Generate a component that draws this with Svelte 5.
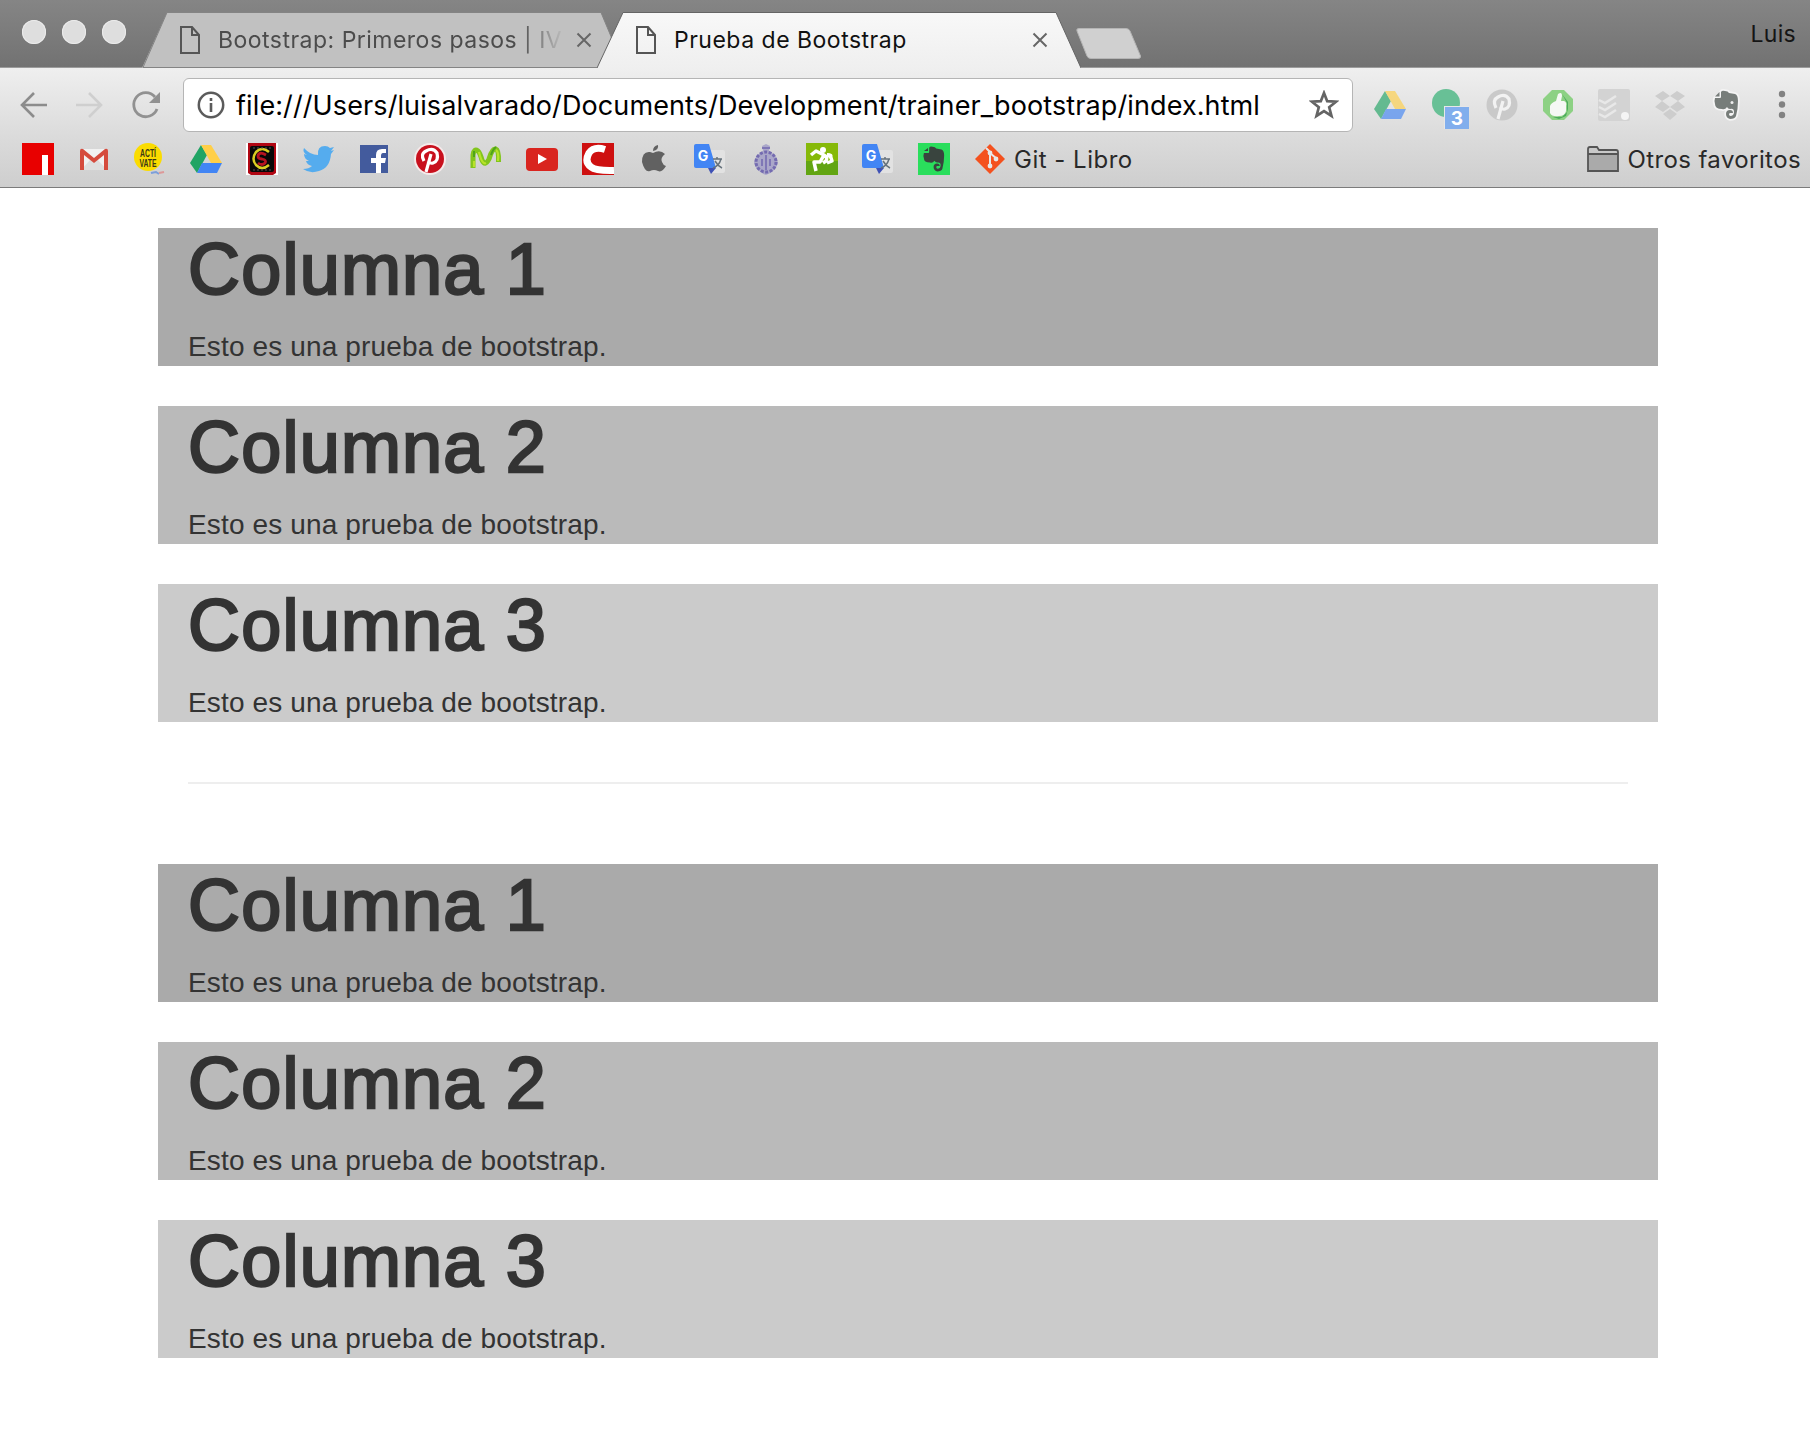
<script>
  const bookmarks = [
    'tile', 'gmail', 'acti', 'drive', 'cs', 'twitter', 'facebook', 'pinterest', 'movistar',
    'youtube', 'cinema', 'apple', 'translate', 'crest', 'runner', 'translate', 'evernote'
  ];
  const extensions = ['drive', 'circle', 'pin', 'thumb', 'todo', 'dropbox', 'elephant'];
  const groups = [[1, 2, 3], [1, 2, 3]];
  const elephantPath =
    'M11 3Q12 1 15 2Q18 2 19 4L25 5Q28 6 28 12Q28 20 26 27Q25 30 20 30Q16 29 16 25Q16 21 20 21Q23 21 23 24H20Q18 25 20 27Q24 27 24 23Q24 19 20 20Q18 20 17 18Q15 21 12 20Q5 20 5 15Q4 12 5 9H10Q11 9 11 8Z';
</script>

{#snippet file()}
  <svg class="file" viewBox="0 0 20 28"><path d="M1 1H12L19 9V27H1ZM12 1V9H19" /></svg>
{/snippet}

{#snippet cross()}
  <svg class="cross" viewBox="0 0 16 16"><path d="M1.5 1.5L14.5 14.5M14.5 1.5L1.5 14.5" /></svg>
{/snippet}

{#snippet icon(name)}
  <svg class="icon" viewBox="0 0 32 32">
    {#if name === 'tile'}
      <path fill="#e80000" d="M0 0H32V32H0Z" /><path fill="#fff" d="M20 12H26V32H20Z" />
    {:else if name === 'gmail'}
      <path fill="#f1f1f1" d="M3 6H29V27H3Z" /><path fill="#dedede" d="M3 27L13 16L16 19L19 16L29 27Z" />
      <path fill="#d54b3d" d="M2 8Q2 5 5 6L16 15L27 6Q30 5 30 8V27H26V12L16 20L6 12V27H2Z" />
    {:else if name === 'acti'}
      <circle cx="14" cy="14" r="14" fill="#fbdc00" />
      <text class="tiny" transform="translate(14 14) scale(.68 1)">ACTÍ</text><text class="tiny" transform="translate(14 23.5) scale(.68 1)">VATE</text>
      <path d="M17 30L22 29L25 31" stroke="#7c9fdb" stroke-width="2" fill="none" /><path d="M25 30L30 29" stroke="#d99" stroke-width="2" />
    {:else if name === 'drive'}
      <path fill="#20a464" d="M11 2L17 12L7 30L0 20Z" /><path fill="#ffcf48" d="M11 2H21L32 20H21Z" /><path fill="#4285f4" d="M12 20H32L27 30H7Z" />
    {:else if name === 'cs'}
      <path fill="#fff" d="M0 0H32V32H0Z" /><path fill="#b00713" d="M2 0H30V30L27 32H5L2 30Z" /><rect x="4" y="3" width="24" height="26" rx="2" fill="#080808" />
      <path d="M23 9Q16 3 10 9Q5 16 10 22Q16 28 23 22" fill="none" stroke="#d9cd22" stroke-width="2.5" />
      <path d="M20 12Q13 8 12 13Q12 16 16 16Q21 17 19 20Q16 23 12 20" fill="none" stroke="#b61420" stroke-width="2.8" />
      <path d="M7 5H25M7 27H25" stroke="#555" stroke-dasharray="2 2" />
    {:else if name === 'twitter'}
      <path fill="#55acee" d="M2 5Q8 12 16 12Q15 3 23 3Q26 3 28 5L32 4L29 8L32 7L29 11Q28 25 17 28Q8 31 1 26Q7 26 10 23Q5 22 4 18H7Q2 16 2 11L5 12Q0 9 2 5Z" />
    {:else if name === 'facebook'}
      <path fill="#435b9d" d="M2 2H30V30H2Z" /><path fill="#fff" d="M18 30V20H13V15H18V12Q18 6 24 6H28V10H25Q23 10 23 13V15H28L27 20H23V30Z" />
    {:else if name === 'pinterest'}
      <circle cx="16" cy="16" r="16" fill="#f5eaea" /><circle cx="16" cy="16" r="14" fill="#c8101d" />
      <path d="M12 29L17 11M10 18Q6 11 12 8Q19 4 23 10Q25 18 19 20Q16 21 14 18" fill="none" stroke="#fff" stroke-width="3.2" />
    {:else if name === 'movistar'}
      <path d="M3 25V12Q4 5 8 8Q10 10 12 17Q15 24 19 16Q22 5 26 6Q29 7 28.5 19" fill="none" stroke="#82c51c" stroke-width="5" stroke-linejoin="round" />
      <path d="M9 9Q12 22 16 20M26 7Q29 9 28 18M4 24V18" fill="none" stroke="#b9e22a" stroke-width="2.2" /><path d="M21 12Q23 6 26 4M4 8V14" fill="none" stroke="#4da31c" stroke-width="2" />
    {:else if name === 'youtube'}
      <rect y="5" width="32" height="23" rx="4" fill="#d9251f" /><path fill="#fff" d="M12 11L21 16L12 21Z" />
    {:else if name === 'cinema'}
      <path fill="#ce1010" d="M0 0H32V32H0Z" /><path d="M23 6.5Q12 3 7 10Q2 19 9 24Q14 28 32 27.5" fill="none" stroke="#fff" stroke-width="7" />
    {:else if name === 'apple'}
      <path fill="#616161" d="M15 10Q22 6 27 11Q22 15 24 19Q25 22 28 23Q24 30 20 28Q16 26 12 28Q7 30 4 19Q4 8 12 9ZM15 8Q15 3 20 2Q21 7 15 8Z" />
    {:else if name === 'translate'}
      <rect x="16" y="7" width="15" height="23" rx="2" fill="#e2e2e2" /><path fill="#4285f4" d="M2 1H15L22 25H2Q0 25 0 23V3Q0 1 2 1Z" />
      <path fill="#3f51b5" d="M14 25H22L17 31Z" />
      <text class="letter" x="9" y="18">G</text><path d="M19 16H28M23 14V16M27 16Q25 23 19 25M21 18Q24 23 28 25" fill="none" stroke="#66727c" stroke-width="1.5" />
    {:else if name === 'crest'}
      <path fill="#aaa7c9" d="M12 3L16 1L20 3L19 8Q27 12 28 20Q25 29 16 32Q7 29 4 20Q5 12 13 8Z" />
      <ellipse cx="16" cy="19" rx="10" ry="10" fill="none" stroke="#746bb0" stroke-width="3" stroke-dasharray="3 1.5" />
      <path d="M12 5H20M16 12V27M12 16V23M20 16V23" stroke="#7f77b6" stroke-width="2" fill="none" />
    {:else if name === 'runner'}
      <path fill="#86b909" d="M0 0H32V32H0Z" /><path fill="#62a512" d="M0 18H32V32H0Z" /><circle cx="17" cy="7" r="3" fill="#fff" />
      <path d="M5 12L10 8L18 12L14 19H8L10 28M18 12Q22 14 20 18L17 20M21 12Q25 12 26 18L21 20" fill="none" stroke="#fff" stroke-width="3.5" stroke-linejoin="round" />
      <path d="M21 11Q27 11 25 14" fill="none" stroke="#fff" stroke-width="2" />
    {:else if name === 'evernote'}
      <path fill="#2ade5c" d="M0 0H32V32H0Z" /><path transform="translate(1.5 2) scale(.88)" d={elephantPath} fill="#39443e" /><path d="M6 8L10 5V8Z" fill="#39443e" />
    {:else if name === 'git'}
      <path fill="#f4511e" d="M16 1L31 16L16 31L1 16Z" /><path d="M12 5L16 9V24M16 10L23 16" stroke="#e7e7e7" stroke-width="2" fill="none" />
      <circle cx="16" cy="10" r="2.4" fill="#e7e7e7" /><circle cx="16" cy="23" r="2.4" fill="#e7e7e7" /><circle cx="22" cy="16" r="2.4" fill="#e7e7e7" />
    {:else if name === 'circle'}
      <circle cx="16" cy="14" r="14" fill="#68c096" />
    {:else if name === 'pin'}
      <circle cx="16" cy="16" r="15.5" fill="#c9c9c9" />
      <path d="M12 30L17 12M10 19Q6 11 12 8Q19 4 23 10Q25 18 19 20Q16 21 14 18" fill="none" stroke="#f2f2f2" stroke-width="3.2" />
    {:else if name === 'thumb'}
      <path fill="#8dd184" d="M10 1H22L31 10V22L22 31H10L1 22V10Z" /><path fill="#4caa5c" d="M20 5L25 14V23L20 28H11L17 30L24 27L26 20V13Z" />
      <path fill="#f5f8f4" d="M16 5Q20 2 20 7L19 12H22Q25 13 24 17V22Q23 27 17 27Q10 28 8 24V17Q9 14 14 12Z" />
    {:else if name === 'todo'}
      <rect width="32" height="32" rx="2" fill="#d3d3d3" /><path d="M1 11L7 14L18 7M1 18L7 21L18 14M1 25L7 28L18 21" fill="none" stroke="#e8e8e8" stroke-width="2.5" /><circle cx="27" cy="27" r="4" fill="#f4f4f4" />
    {:else if name === 'dropbox'}
      <path fill="#cdcdcd" d="M1 7L9 2L16 7L8 12ZM16 7L23 2L31 7L24 12ZM1 18L8 12L16 18L9 23ZM16 18L24 12L31 18L23 23ZM9 25L16 20L23 25L16 31Z" />
    {:else if name === 'elephant'}
      <path d={elephantPath} fill="#777d7a" stroke="#f4f4f4" stroke-width="3.5" stroke-linejoin="round" /><path d={elephantPath} fill="#777d7a" />
      <path fill="#777d7a" d="M5 7.5L9.5 3V7.5Z" /><circle cx="22" cy="13.5" r="1.5" fill="#eee" />
    {/if}
  </svg>
{/snippet}

<div class="window">
  <header class="titlebar">
    <div class="lights"><i></i><i></i><i></i></div>
    <div class="tab idle">
      <svg class="shape" viewBox="0 0 482 56"><path class="fill" d="M0 56L25 .5H459L482 56Z" /><path class="edge" d="M1 55.5L25 .5H459L482 55.5Z" /></svg>
      {@render file()}<span class="title first">Bootstrap: Primeros pasos | IVI</span>{@render cross()}
    </div>
    <div class="tab active">
      <svg class="shape" viewBox="0 0 484 56">
        <defs><linearGradient id="tabfill" x2="0" y2="1"><stop stop-color="#f8f8f8" /><stop offset="1" stop-color="#efefef" /></linearGradient></defs>
        <path fill="url(#tabfill)" d="M0 56L26 .5H459L484 56Z" /><path class="edge" d="M0 56L26 .5H459L484 56" />
      </svg>
      {@render file()}<span class="title second">Prueba de Bootstrap</span>{@render cross()}
    </div>
    <svg class="newtab" viewBox="0 0 66 31"><path d="M3 .5H50Q53 .5 54 3L64.5 28Q65 30.5 62 30.5H15Q12 30.5 11 28L1 3Q0 .5 3 .5Z" /></svg>
    <span class="user">Luis</span>
  </header>

  <nav class="toolbar">
    <div class="controls">
      <svg viewBox="0 0 32 32"><path d="M29 16H4M16 4L4 16L16 28" fill="none" stroke="#8c8c8c" stroke-width="2.6" /></svg>
      <svg viewBox="0 0 32 32"><path d="M2 16H27M15 4L27 16L15 28" fill="none" stroke="#cfcfcf" stroke-width="2.6" /></svg>
      <svg viewBox="0 0 32 32"><path d="M27 20A12 12 0 1 1 25 8" fill="none" stroke="#919191" stroke-width="2.8" /><path d="M30 3V14H19Z" fill="#919191" /></svg>
    </div>
    <div class="omnibox">
      <svg class="info" viewBox="0 0 28 28"><circle cx="14" cy="14" r="12.2" fill="none" stroke="#5b5b5b" stroke-width="2.5" /><path fill="#5b5b5b" d="M12.7 7H15.3V10H12.7ZM12.7 12H15.3V21H12.7Z" /></svg>
      <span class="url">file:///Users/luisalvarado/Documents/Development/trainer_bootstrap/index.html</span>
      <svg class="star" viewBox="0 0 30 30"><path d="M15 3L18.2 11.2L27 11.7L20.2 17.3L22.5 26L15 21.1L7.5 26L9.8 17.3L3 11.7L11.8 11.2Z" /></svg>
    </div>
    <div class="extensions">
      {#each extensions as name}
        <span class="ext" class:pale={name === 'drive'}>{@render icon(name)}{#if name === 'circle'}<b class="badge">3</b>{/if}</span>
      {/each}
    </div>
    <svg class="menu" viewBox="0 0 8 30"><circle cx="4" cy="4" r="3.2" /><circle cx="4" cy="14.5" r="3.2" /><circle cx="4" cy="25" r="3.2" /></svg>
  </nav>

  <nav class="bookmarks">
    {#each bookmarks as name}{@render icon(name)}{/each}
    <span class="git">{@render icon('git')}<span class="gitname">Git - Libro</span></span>
    <span class="others">
      <svg class="folder" viewBox="0 0 32 26"><path d="M1 25V3Q1 1 3 1H10L12 4H29Q31 4 31 6V25Z" fill="#c9c9c9" /><path d="M1 8H31V25H1Z" fill="#aaa" /><path d="M1 25V3Q1 1 3 1H10L12 4H29Q31 4 31 6V25ZM1 8H31" fill="none" stroke="#555" stroke-width="1.8" /></svg>
      <span class="othername">Otros favoritos</span>
    </span>
  </nav>

  <main>
    {#each groups as group, g}
      {#if g > 0}<hr />{/if}
      <div class="group">
        {#each group as n}
          <section class="column shade{n}"><h1>Columna {n}</h1><p>Esto es una prueba de bootstrap.</p></section>
        {/each}
      </div>
    {/each}
  </main>
</div>

<style>
  :global(body) { margin: 0; background: #fff; }
  .window { width: 1810px; height: 1444px; overflow: hidden; font-family: Inter, Roboto, sans-serif; background: #fff; }
  svg { display: block; flex: none; }
  .titlebar { box-sizing: border-box; height: 68px; display: flex; align-items: flex-start; padding-top: 12px; background: linear-gradient(#858585, #727272); border-bottom: 1px solid #9c9c9c; }
  .lights { display: flex; gap: 16px; padding: 8px 0 0 22px; width: 120px; flex: none; }
  .lights i { width: 24px; height: 24px; border-radius: 50%; background: #dedede; box-shadow: inset 0 0 0 1px #ebebeb; }
  .tab { position: relative; display: flex; align-items: center; height: 56px; box-sizing: border-box; flex: none; }
  .idle { width: 482px; padding-left: 38px; }
  .active { width: 484px; padding-left: 39px; margin-left: -27px; z-index: 1; }
  .shape { position: absolute; left: 0; top: 0; width: 100%; height: 56px; }
  .fill { fill: #c1c1c1; }
  .edge { fill: none; stroke: #656565; stroke-width: 1; }
  .idle .edge { stroke: #848484; }
  .file { position: relative; width: 20px; height: 28px; fill: none; stroke: #555; stroke-width: 2; }
  .title { position: relative; font-size: 23px; white-space: nowrap; margin-left: 18px; color: #111; overflow: hidden; flex: none; width: 350px; }
  .first { color: #4c4c4c; letter-spacing: .48px; -webkit-mask-image: linear-gradient(90deg, #000 86%, transparent 99%); mask-image: linear-gradient(90deg, #000 86%, transparent 99%); }
  .second { letter-spacing: .5px; }
  .cross { position: relative; width: 16px; height: 16px; margin-left: 8px; fill: none; stroke: #666; stroke-width: 2; }
  .newtab { width: 66px; height: 31px; margin: 16px 0 0 -5px; fill: #d0d0d0; stroke: #b5b5b5; }
  .user { margin: 8px 14px 0 auto; font-size: 23px; line-height: 28px; letter-spacing: .3px; color: #151515; }
  .toolbar { height: 68px; display: flex; align-items: center; padding-top: 6px; box-sizing: border-box; background: linear-gradient(#efefef, #dbdbdb); }
  .controls { display: flex; gap: 24px; padding-left: 18px; width: 165px; flex: none; }
  .controls svg { width: 32px; height: 32px; }
  .omnibox { box-sizing: border-box; width: 1170px; height: 54px; display: flex; align-items: center; padding: 0 13px; background: #fff; border: 1px solid #b5b5b5; border-radius: 6px; flex: none; }
  .info { width: 28px; height: 28px; }
  .url { margin-left: 11px; font-size: 27px; letter-spacing: .105px; color: #000; white-space: nowrap; flex: 1; }
  .star { width: 30px; height: 30px; fill: none; stroke: #646464; stroke-width: 2.7; }
  .extensions { display: flex; gap: 24px; padding-left: 21px; }
  .ext { position: relative; width: 32px; height: 32px; }
  .pale { opacity: .65; }
  .badge { position: absolute; left: 14px; top: 17px; width: 24px; height: 22px; background: #81aeed; color: #fff; font-size: 19px; line-height: 23px; text-align: center; border-top: 1px solid #e7e7e7; border-left: 1px solid #e7e7e7; }
  .menu { width: 8px; height: 30px; margin-left: 36px; fill: #828282; }
  .icon { width: 32px; height: 32px; }
  .bookmarks { height: 52px; box-sizing: border-box; display: flex; gap: 24px; align-items: center; padding: 0 9px 5px 22px; background: linear-gradient(#dbdbdb, #cecece); border-bottom: 1px solid #7b7b7b; color: #292929; font-size: 24px; }
  .git, .others { display: flex; align-items: center; gap: 8px; white-space: nowrap; }
  .gitname { letter-spacing: .5px; }
  .others { margin-left: auto; }
  .othername { letter-spacing: .4px; }
  .folder { width: 32px; height: 26px; }
  .tiny { font-family: "Liberation Sans", sans-serif; font-size: 10px; font-weight: bold; text-anchor: middle; fill: #3b3817; }
  .letter { font-size: 14px; font-weight: bold; text-anchor: middle; fill: #fff; }
  main { padding: 40px 152px 0 158px; }
  .group { display: flex; flex-direction: column; gap: 40px; }
  .column { height: 138px; box-sizing: border-box; padding: 2px 30px 0; color: #333; font-family: "Liberation Sans", sans-serif; }
  .shade1 { background: #aaa; }
  .shade2 { background: #bababa; }
  .shade3 { background: #cbcbcb; }
  h1 { margin: 0; font-size: 72px; font-weight: 400; line-height: 79px; letter-spacing: 1.2px; -webkit-text-stroke: 2.4px #333; }
  p { margin: 18px 0 0; font-size: 28px; line-height: 40px; letter-spacing: .14px; }
  hr { height: 2px; border: 0; background: #eee; margin: 60px 30px 80px; }
</style>
